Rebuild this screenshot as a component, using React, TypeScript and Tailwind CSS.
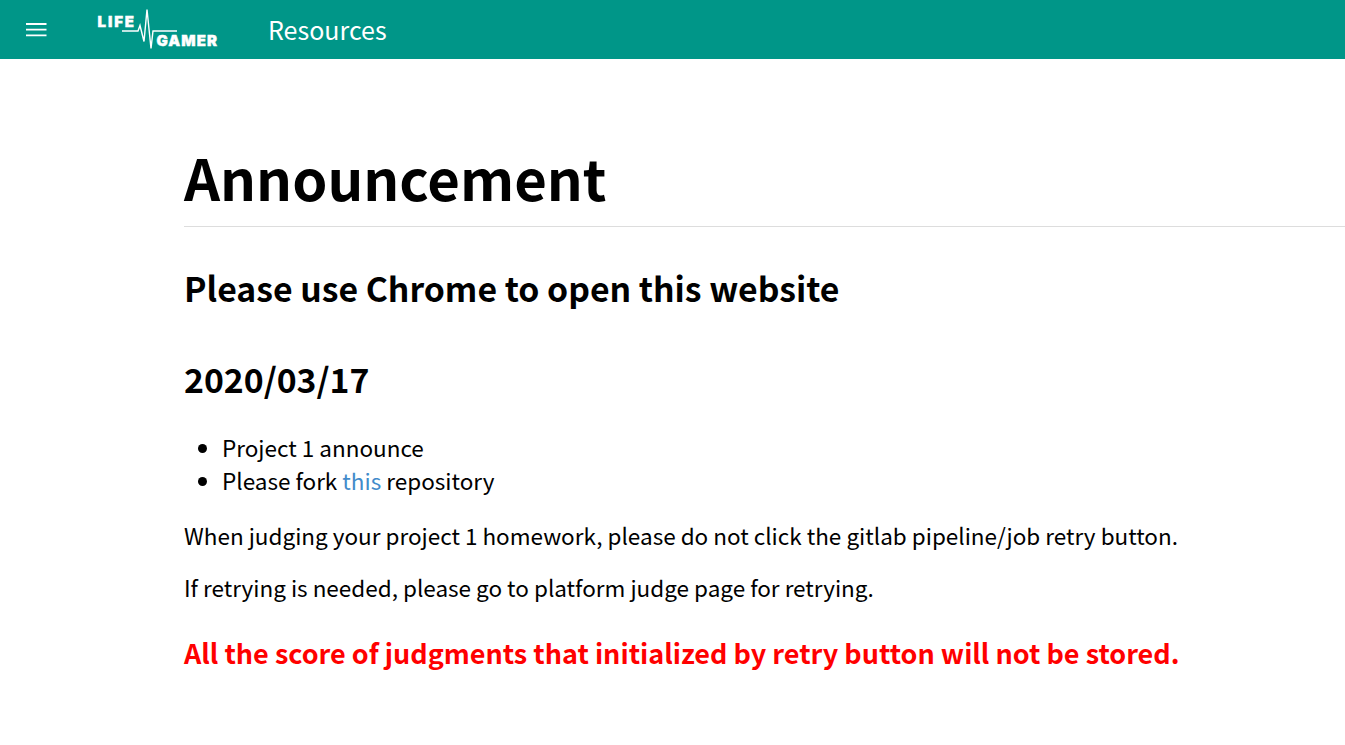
const FONT = "font-['Noto_Sans_CJK_SC','Noto_Sans',sans-serif]";

function MenuIcon() {
  return (
    <svg width="24" height="24" viewBox="0 0 24 24" className="block">
      <path d="M2 6H22.500M2 11.700H22.500M2 17.400H22.500" stroke="#fff" strokeWidth="1.800" fill="none" />
    </svg>
  );
}

function Logo() {
  return (
    <svg width="122" height="50" viewBox="0 0 122 50" className="block">
      <text x="0.500" y="21.500" fill="#fff" stroke="#fff" strokeWidth="0.400" fontSize="15" fontWeight="900" letterSpacing="1.900" fontFamily="Inter, sans-serif">
        LIFE
      </text>
      <text x="59.500" y="40.500" fill="#fff" stroke="#fff" strokeWidth="0.400" fontSize="15" fontWeight="900" letterSpacing="1.100" fontFamily="Inter, sans-serif">
        GAMER
      </text>
      <path
        d="M25 26H41L43 20.500L47 36.500L50 4.500L54 43.500L56 26H80"
        fill="none"
        stroke="#fff"
        strokeWidth="1.400"
      />
    </svg>
  );
}

export default function App() {
  return (
    <div className={`min-h-[745px] bg-white text-black ${FONT}`}>
      <header className="h-[59px] bg-[#009688] flex items-center text-white">
        <div className="ml-6">
          <MenuIcon />
        </div>
        <div className="ml-[49px]">
          <Logo />
        </div>
        <span className="ml-[49px] text-[25px] leading-none font-normal">Resources</span>
      </header>
      <main className="pl-[184px] pt-[79px]">
        <h1 className="text-[56.250px] leading-[78px] font-bold h-[89px] border-b border-[#dddddd]">Announcement</h1>
        <h3 className="mt-[37px] text-[33.750px] leading-[47px] font-bold">Please use Chrome to open this website</h3>
        <h3 className="mt-[44px] text-[33.750px] leading-[47px] font-bold">2020/03/17</h3>
        <ul className="mt-[29px] pl-[38px] list-disc text-[22.500px] leading-[32px]">
          <li>Project 1 announce</li>
          <li className="mt-px">
            Please fork <a className="text-[#428bca]">this</a> repository
          </li>
        </ul>
        <p className="mt-[23px] text-[22.500px] leading-[32px]">
          When judging your project 1 homework, please do not click the gitlab pipeline/job retry button.
        </p>
        <p className="mt-[20px] text-[22.500px] leading-[32px]">If retrying is needed, please go to platform judge page for retrying.</p>
        <p className="mt-[30px] text-[27px] leading-[40px] font-bold text-[#ff0000]">
          All the score of judgments that initialized by retry button will not be stored.
        </p>
      </main>
    </div>
  );
}
